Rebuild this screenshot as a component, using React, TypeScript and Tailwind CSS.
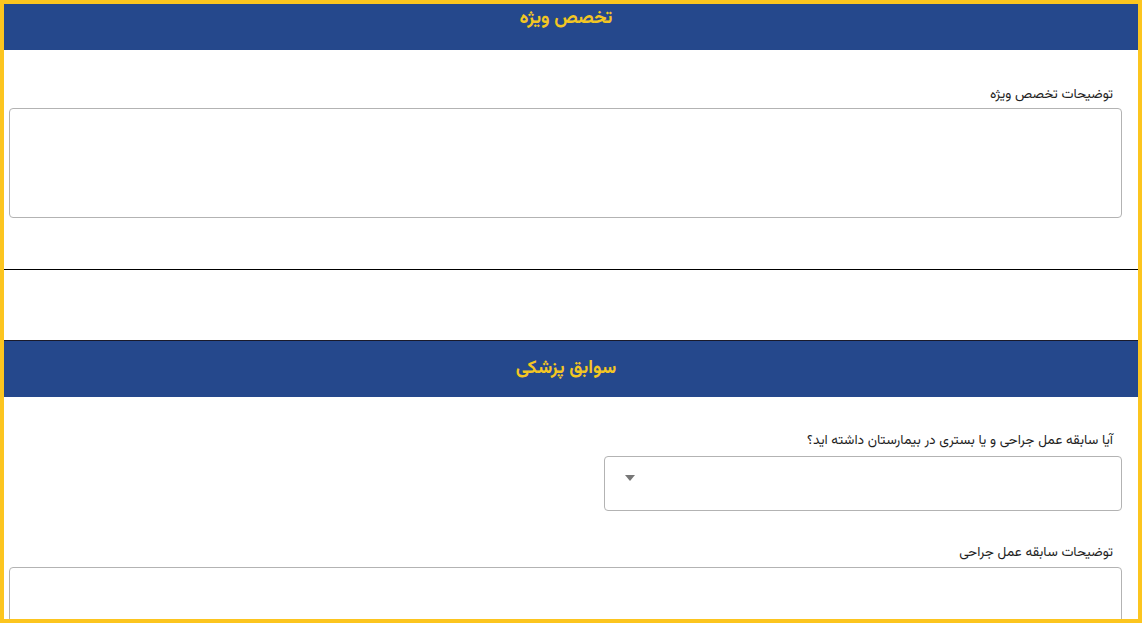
import React from "react";

const font = { fontFamily: '"Vazirmatn", "Noto Sans Arabic", "DejaVu Sans", sans-serif' };

export default function App() {
  return (
    <div
      dir="rtl"
      className="box-border h-[623px] w-full overflow-hidden border-4 border-[#fcc51f] bg-white"
      style={font}
    >
      <div className="flex h-[46px] justify-center bg-[#25488c] pr-[10px] pt-[2px]">
        <h2 className="text-[18.5px] font-bold leading-[26px] text-[#f3c623]">تخصص ویژه</h2>
      </div>

      <div className="pl-[5px] pr-[16px]">
        <label className="mt-[35px] block pr-[9px] text-[13.7px] leading-[20px] text-[#1f1f1f]">
          توضیحات تخصص ویژه
        </label>
        <div className="mt-[3px] h-[110px] rounded-[4px] border border-[#b3b3b3]"></div>
      </div>

      <div className="mt-[51px] h-px bg-black"></div>

      <div className="mt-[70px] flex h-[57px] items-center justify-center border-t border-[#1a1a2a] bg-[#25488c] pr-[10px]">
        <h2 className="text-[18.5px] font-bold leading-[26px] text-[#f3c623]">سوابق پزشکی</h2>
      </div>

      <div className="pl-[5px] pr-[16px]">
        <label className="mt-[34px] block pr-[9px] text-[13.7px] leading-[20px] text-[#1f1f1f]">
          آیا سابقه عمل جراحی و یا بستری در بیمارستان داشته اید؟
        </label>
        <div className="mt-[5px] flex h-[55px] w-[518px] items-start justify-end rounded-[4px] border border-[#b3b3b3] pl-[19px] pt-[18px]">
          <svg width="12" height="6" viewBox="0 0 12 6">
            <path d="M1 0 L11 0 L6 6 Z" fill="#777" />
          </svg>
        </div>

        <label className="mt-[32px] block pr-[9px] text-[13.7px] leading-[20px] text-[#1f1f1f]">
          توضیحات سابقه عمل جراحی
        </label>
        <div className="mt-[4px] h-[110px] rounded-[4px] border border-[#b3b3b3]"></div>
      </div>
    </div>
  );
}
